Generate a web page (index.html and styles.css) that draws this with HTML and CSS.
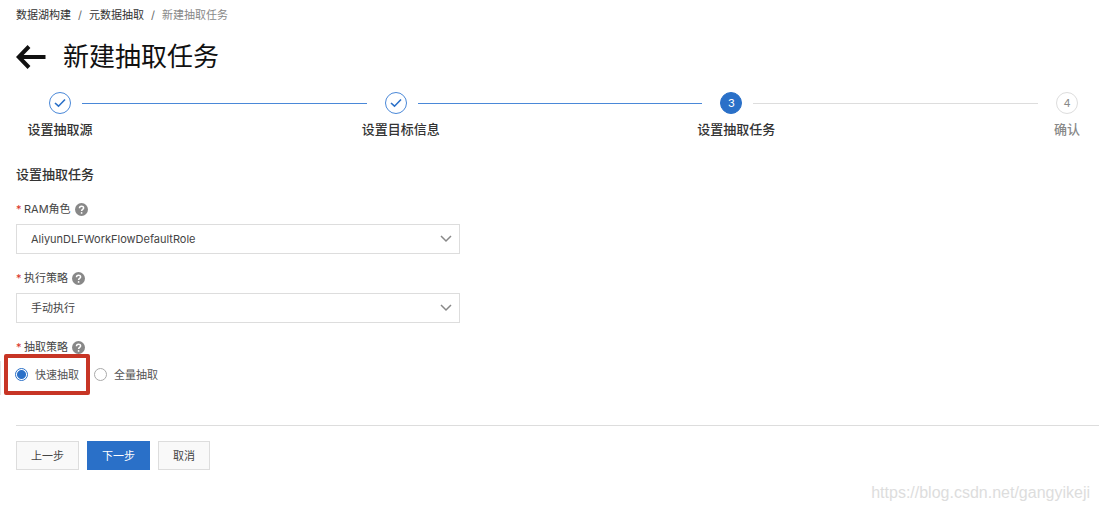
FILE: index.html
```html
<!DOCTYPE html>
<html lang="zh-CN">
<head>
  <meta charset="UTF-8" />
  <meta name="viewport" content="width=device-width, initial-scale=1.0"/>
  <title>新建抽取任务</title>
  <link rel="stylesheet" href="styles.css">
</head>
<body>
  <nav class="breadcrumb">
    <a href="#">数据湖构建</a>
    <span class="separator">/</span>
    <a href="#">元数据抽取</a>
    <span class="separator">/</span>
    <span class="current">新建抽取任务</span>
  </nav>

  <header class="page-header">
    <a class="back" href="#" aria-label="返回">
      <svg width="30" height="24" viewBox="0 0 30 24" fill="none" stroke="currentColor" stroke-width="4"><path d="M29.500 12H3M13 1.500L2.800 12L13 22.500"/></svg>
    </a>
    <h1>新建抽取任务</h1>
  </header>

  <!-- Steps -->
  <div class="steps">
    <div class="step done">
      <span class="circle"><svg width="12" height="10" viewBox="0 0 12 10" fill="none" stroke="currentColor" stroke-width="1.6"><path d="M1 5l3.500 3.200L11 1.500"/></svg></span>
      <span class="step-label">设置抽取源</span>
    </div>
    <div class="line done"></div>
    <div class="step done">
      <span class="circle"><svg width="12" height="10" viewBox="0 0 12 10" fill="none" stroke="currentColor" stroke-width="1.6"><path d="M1 5l3.500 3.200L11 1.500"/></svg></span>
      <span class="step-label">设置目标信息</span>
    </div>
    <div class="line done"></div>
    <div class="step active">
      <span class="circle">3</span>
      <span class="step-label">设置抽取任务</span>
    </div>
    <div class="line"></div>
    <div class="step">
      <span class="circle">4</span>
      <span class="step-label">确认</span>
    </div>
  </div>

  <!-- Form -->
  <form>
    <h2>设置抽取任务</h2>

    <div class="field">
      <div class="field-label">
        <span class="required">*</span>
        <label for="role">RAM角色</label>
        <svg class="help" viewBox="0 0 13 13"><circle cx="6.500" cy="6.500" r="6.500" fill="#888"/><path d="M4.500 5.200C4.500 2.500 8.600 2.500 8.600 5C8.600 6.500 6.600 6.300 6.600 8" fill="none" stroke="#fff" stroke-width="1.500"/><circle cx="6.600" cy="9.900" r="0.900" fill="#fff"/></svg>
      </div>
      <div class="select-box">
        <select id="role"><option>AliyunDLFWorkFlowDefaultRole</option></select>
        <svg class="arrow" viewBox="0 0 12 8"><path d="M1 1l5 5 5-5"/></svg>
      </div>
    </div>

    <div class="field">
      <div class="field-label">
        <span class="required">*</span>
        <label for="schedule">执行策略</label>
        <svg class="help" viewBox="0 0 13 13"><circle cx="6.500" cy="6.500" r="6.500" fill="#888"/><path d="M4.500 5.200C4.500 2.500 8.600 2.500 8.600 5C8.600 6.500 6.600 6.300 6.600 8" fill="none" stroke="#fff" stroke-width="1.500"/><circle cx="6.600" cy="9.900" r="0.900" fill="#fff"/></svg>
      </div>
      <div class="select-box">
        <select id="schedule"><option>手动执行</option></select>
        <svg class="arrow" viewBox="0 0 12 8"><path d="M1 1l5 5 5-5"/></svg>
      </div>
    </div>

    <div class="field" role="radiogroup" aria-labelledby="strategy">
      <div class="field-label">
        <span class="required">*</span>
        <span id="strategy">抽取策略</span>
        <svg class="help" viewBox="0 0 13 13"><circle cx="6.500" cy="6.500" r="6.500" fill="#888"/><path d="M4.500 5.200C4.500 2.500 8.600 2.500 8.600 5C8.600 6.500 6.600 6.300 6.600 8" fill="none" stroke="#fff" stroke-width="1.500"/><circle cx="6.600" cy="9.900" r="0.900" fill="#fff"/></svg>
      </div>
      <div class="radios">
        <label class="radio marked"><input type="radio" name="strategy" checked>快速抽取</label>
        <label class="radio"><input type="radio" name="strategy">全量抽取</label>
      </div>
    </div>

    <div class="actions">
      <button type="button">上一步</button>
      <button type="submit" class="primary">下一步</button>
      <button type="button">取消</button>
    </div>
  </form>

  <footer class="watermark">https://blog.csdn.net/gangyikeji</footer>
</body>
</html>
```
FILE: styles.css
```css
* {
  box-sizing: border-box;
}

body {
  margin: 0;
  padding: 6px 0 0 16px;
  font-family: Inter, "Noto Sans CJK SC", sans-serif;
  font-size: 11px;
  line-height: 18px;
  color: #444;
  background: #fff;
}

a {
  color: inherit;
  text-decoration: none;
}

.breadcrumb {
  display: flex;
  gap: 7px;
  color: #333;
}

.breadcrumb .separator {
  color: #666;
}

.breadcrumb .current {
  color: #888;
}

.page-header {
  display: flex;
  align-items: center;
  gap: 17px;
  margin-top: 15px;
  color: #111;
}

.back {
  display: flex;
}

h1 {
  margin: 0;
  font-size: 26px;
  line-height: 36px;
  font-weight: 400;
}

/* Steps */
.steps {
  display: flex;
  margin: 17px 21px 0 33px;
}

.step {
  width: 22px;
  color: #888;
}

.circle {
  display: flex;
  align-items: center;
  justify-content: center;
  height: 22px;
  border: 1px solid #ddd;
  border-radius: 50%;
}

.step-label {
  display: block;
  margin: 5px -23px 0;
  font-size: 13px;
  line-height: 20px;
  font-weight: 500;
  text-align: center;
  white-space: nowrap;
}

.step.done .circle {
  color: #2a70c8;
  border-color: #4a88d8;
}

.step.active .circle {
  color: #fff;
  background: #2a70c8;
  border-color: #2a70c8;
}

.step.done .step-label,
.step.active .step-label {
  color: #333;
}

.line {
  flex: 1;
  height: 1px;
  margin: 11px 18px 0 11px;
  background: #ddd;
}

.line.done {
  background: #4a88d8;
}

/* Form */
h2 {
  margin: 25px 0 16px;
  font-size: 13px;
  line-height: 20px;
  font-weight: 500;
  color: #333;
}

.field {
  margin-bottom: 15px;
}

.field-label {
  display: flex;
  align-items: center;
  gap: 4px;
  margin-bottom: 6px;
}

.required {
  width: 4px;
  color: #d93026;
}

.help {
  width: 13px;
  height: 13px;
}

.select-box {
  position: relative;
  max-width: 444px;
}

select {
  display: block;
  width: 100%;
  height: 30px;
  padding: 0 32px 0 14px;
  font: inherit;
  color: #444;
  background: #fff;
  border: 1px solid #ddd;
  border-radius: 0;
  appearance: none;
}

.arrow {
  position: absolute;
  top: 11px;
  right: 8px;
  width: 12px;
  height: 8px;
  fill: none;
  stroke: #888;
  stroke-width: 1.5;
  pointer-events: none;
}

.radios {
  display: flex;
  align-items: center;
  gap: 4px;
  margin: -8px 0 0 -16px;
  padding-left: 4px;
  /* short rule at the page edge */
  background: linear-gradient(#e5e5e5, #e5e5e5) left 7px / 1px 100% no-repeat;
}

.radio {
  display: flex;
  align-items: center;
  gap: 7px;
  color: #555;
}

.radio.marked {
  padding: 7px;
  height: 41px;
  border: 4px solid #c73525;
  border-radius: 2px;
}

input[type="radio"] {
  width: 13px;
  height: 13px;
  margin: 0;
  border: 1px solid #aaa;
  border-radius: 50%;
  appearance: none;
}

input[type="radio"]:checked {
  border-color: #2a70c8;
  background: radial-gradient(circle, #2a70c8 4px, #fff 5px);
}

.actions {
  display: flex;
  gap: 8px;
  margin-top: 30px;
  padding-top: 15px;
  border-top: 1px solid #ddd;
}

button {
  height: 29px;
  padding: 0 14px;
  font: inherit;
  color: #444;
  background: #f9f9f9;
  border: 1px solid #ddd;
  cursor: pointer;
}

button.primary {
  color: #fff;
  background: #2a70c8;
  border-color: #2a70c8;
}

.watermark {
  margin: 14px 9px 0 0;
  font-family: "Liberation Sans", Arial, sans-serif;
  font-size: 16px;
  text-align: right;
  color: #ddd;
}
```
